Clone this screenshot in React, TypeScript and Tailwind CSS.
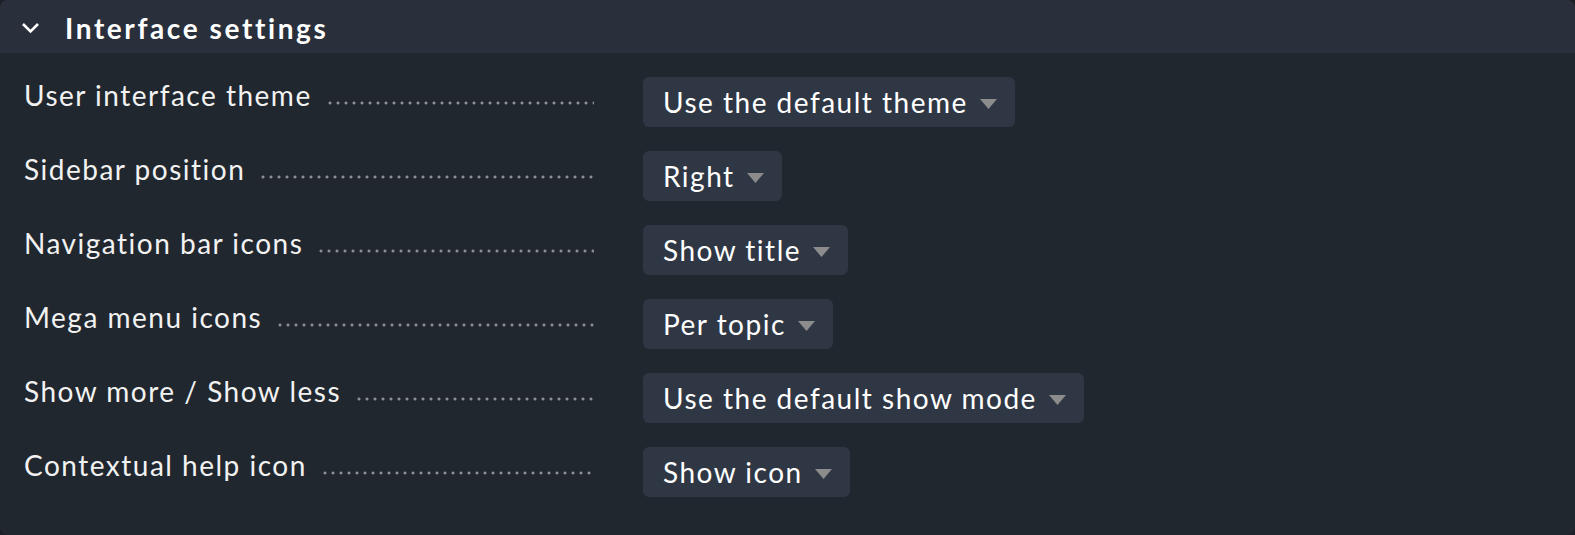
import React from 'react';

const rows = [
  { label: 'User interface theme', value: 'Use the default theme' },
  { label: 'Sidebar position', value: 'Right' },
  { label: 'Navigation bar icons', value: 'Show title' },
  { label: 'Mega menu icons', value: 'Per topic' },
  { label: 'Show more / Show less', value: 'Use the default show mode' },
  { label: 'Contextual help icon', value: 'Show icon' },
];

function Select({ value }: { value: string }) {
  return (
    <div className="h-[50px] flex items-center gap-3 pl-5 pr-[18px] rounded-md bg-[#2f3744] text-white text-[28px] tracking-[1.5px]">
      <span className="leading-none">{value}</span>
      <svg width="17" height="10" viewBox="0 0 17 10" className="mt-[4px]">
        <polygon points="0,0 17,0 8.5,10" fill="#8c8c8c" />
      </svg>
    </div>
  );
}

export default function App() {
  return (
    <div className="h-[535px] w-full bg-[#1b2027] font-['Lato',sans-serif]">
      <div className="h-full rounded-lg bg-[#21272f] overflow-hidden">
        {/* Section header */}
        <div className="h-[53px] bg-[#29303b] flex items-center pl-[21px]">
          <svg width="19" height="12" viewBox="0 0 19 12" className="mt-[2px]">
            <path d="M2 2 L9.5 9.5 L17 2" fill="none" stroke="#ffffff" strokeWidth="2.6" />
          </svg>
          <span className="ml-[25px] text-white text-[28px] font-bold tracking-[2.6px] mt-[3px]">Interface settings</span>
        </div>

        {/* Settings rows */}
        <div className="pt-6 pl-6 flex flex-col gap-6">
          {rows.map((r) => (
            <div key={r.label} className="flex items-start h-[50px]">
              <div className="w-[570px] flex items-end text-[#f2f2f2] text-[28px] tracking-[1.5px] leading-[34px] pt-[1px]">
                <span className="whitespace-nowrap">{r.label}</span>
                <span className="flex-1 ml-[14px] mb-[7px] h-[4px] bg-[radial-gradient(circle,#8b9098_1.2px,transparent_1.8px)] bg-[length:8px_4px] bg-repeat-x" />
              </div>
              <div className="ml-[49px]">
                <Select value={r.value} />
              </div>
            </div>
          ))}
        </div>
      </div>
    </div>
  );
}
